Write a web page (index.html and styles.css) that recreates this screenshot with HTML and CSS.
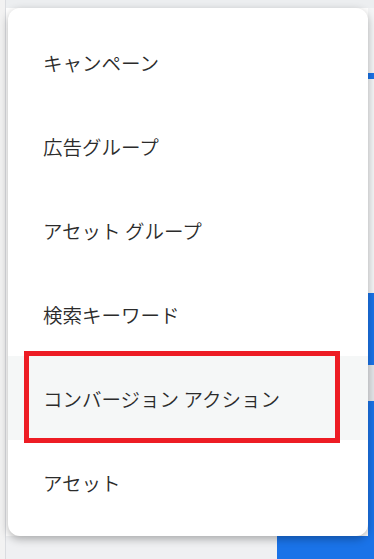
FILE: index.html
```html
<!DOCTYPE html>
<html lang="ja">
<head>
  <meta charset="UTF-8">
  <title>Menu</title>
  <link rel="stylesheet" href="styles.css">
</head>
<body>
  <div class="page">
    <div class="rail"></div>
    <div class="main">
      <div class="topbar"></div>
      <div class="main-body">
        <div class="content"></div>
        <div class="edge">
          <div class="edge-gap" style="height:65px"></div>
          <div class="edge-blue" style="height:6px"></div>
          <div class="edge-gap" style="height:214px"></div>
          <div class="edge-blue" style="height:72px"></div>
          <div class="edge-gray" style="height:36px"></div>
          <div class="edge-blue edge-fill"></div>
        </div>
      </div>
      <div class="bottom">
        <div class="action-btn"></div>
      </div>
    </div>
  </div>

  <div class="menu">
    <div class="menu-item">キャンペーン</div>
    <div class="menu-item">広告グループ</div>
    <div class="menu-item">アセット グループ</div>
    <div class="menu-item">検索キーワード</div>
    <div class="menu-item active">
      コンバージョン アクション
      <span class="mark"></span>
    </div>
    <div class="menu-item">アセット</div>
  </div>
</body>
</html>
```

FILE: styles.css
```css
body {
  margin: 0;
  width: 374px;
  height: 559px;
  overflow: hidden;
  background: #f1f3f4;
  font-family: "Noto Sans CJK JP", "Noto Sans", sans-serif;
}
.page {
  display: flex;
  height: 559px;
}
.rail {
  width: 5px;
  background: #f2f2f2;
  border-right: 1px solid #dadce0;
}
.main {
  flex: 1;
  display: flex;
  flex-direction: column;
}
.topbar {
  height: 8px;
  background: #eceef0;
}
.main-body {
  flex: 1;
  display: flex;
}
.content {
  flex: 1;
  background: #fff;
}
.edge {
  width: 6px;
  display: flex;
  flex-direction: column;
  background: #f4f5f6;
}
.edge-blue {
  background: #1a73e8;
}
.edge-gray {
  background: #e3e5e8;
}
.edge-fill {
  flex: 1;
}
.bottom {
  height: 23px;
  display: flex;
  justify-content: flex-end;
  background: #eff0f2;
}
.action-btn {
  width: 97px;
  background: #1a73e8;
}

.menu {
  position: absolute;
  top: 8px;
  left: 8px;
  width: 360px;
  padding: 12px 0;
  background: #fff;
  border-radius: 12px;
  box-shadow: 0 3px 8px rgba(0, 0, 0, 0.3);
}
.menu-item {
  position: relative;
  height: 84px;
  display: flex;
  align-items: center;
  padding-left: 35px;
  font-size: 19.5px;
  font-weight: 350;
  color: #2b2b2b;
}
.menu-item.active {
  background: #f5f7f7;
}
.mark {
  position: absolute;
  left: 16px;
  right: 28px;
  top: -5px;
  bottom: -3px;
  border: 5px solid #ed1c24;
}
```
